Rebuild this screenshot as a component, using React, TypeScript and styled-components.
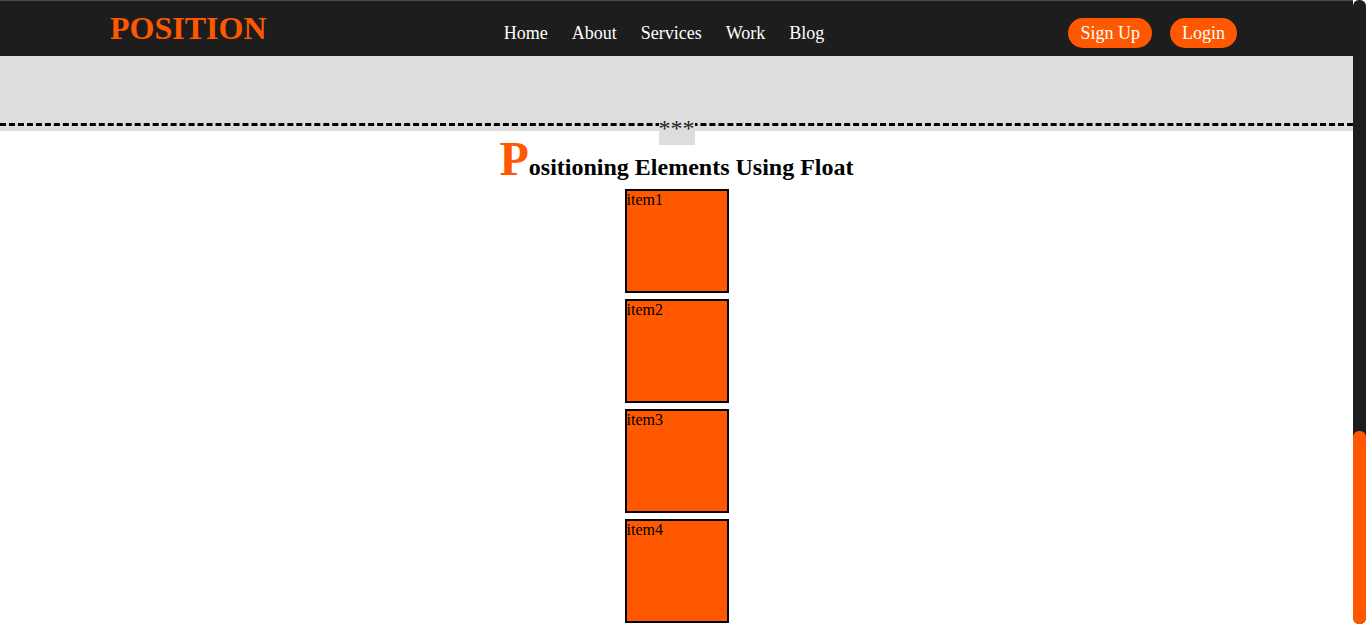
import React from "react";
import styled, { createGlobalStyle } from "styled-components";

const ORANGE = "#ff5800";
const DARK = "#1d1d1d";

const GlobalStyle = createGlobalStyle`
  html, body {
    margin: 0;
    padding: 0;
    overflow: hidden;
    background: #fff;
  }
  body {
    font-family: "Liberation Serif", "Times New Roman", serif;
    color: #000;
  }
`;

const Shell = styled.div`
  display: flex;
  height: 100vh;
  overflow: hidden;
  background: #fff;
`;

const Page = styled.div`
  flex: 1;
  min-width: 0;
  overflow: hidden;
`;

const Header = styled.header`
  display: flex;
  align-items: baseline;
  justify-content: space-between;
  box-sizing: border-box;
  height: 56px;
  padding: 11px 116px 0 110px;
  background: ${DARK};
  border-top: 1px solid #4b4b4b;
`;

const Logo = styled.h1`
  margin: 0;
  font-size: 32px;
  line-height: 32px;
  font-weight: bold;
  color: ${ORANGE};
`;

const Nav = styled.nav`
  display: flex;
  gap: 24px;
  margin-right: 7px;
`;

const NavLink = styled.a`
  color: #fff;
  font-size: 18px;
  text-decoration: none;
`;

const Actions = styled.div`
  display: flex;
  gap: 18px;
`;

const PillButton = styled.button`
  font-family: inherit;
  font-size: 18px;
  line-height: 22px;
  padding: 4px 12px;
  border: none;
  border-radius: 16px;
  background: ${ORANGE};
  color: #fff;
`;

const Banner = styled.div`
  box-sizing: border-box;
  height: 75px;
  padding-top: 67px;
  background: #dddddd;
`;

const DashedRule = styled.div`
  position: relative;
  border-top: 3px dashed #000;
`;

const RuleLabel = styled.span`
  position: absolute;
  left: 50%;
  top: -14px;
  transform: translateX(-50%);
  font-size: 24px;
  line-height: 33px;
  color: #222;
  background: #dddddd;
`;

const Main = styled.main`
  display: flex;
  flex-direction: column;
  align-items: center;
`;

const Title = styled.h2`
  margin: 0;
  font-size: 24px;
  font-weight: bold;
  text-align: center;

  &::first-letter {
    font-size: 48px;
    color: ${ORANGE};
  }
`;

const ItemStack = styled.div`
  display: flex;
  flex-direction: column;
  gap: 6px;
  margin-top: 3px;
`;

const Item = styled.div`
  width: 100px;
  height: 100px;
  border: 2px solid #000;
  background: ${ORANGE};
  font-size: 16px;
  flex-shrink: 0;
`;

const ScrollRail = styled.div`
  width: 13px;
  flex-shrink: 0;
  background: #fff;
  display: flex;
`;

const ScrollTrack = styled.div`
  flex: 1;
  display: flex;
  flex-direction: column;
  justify-content: flex-end;
  background: ${DARK};
  border-radius: 6px;
`;

const ScrollThumb = styled.div`
  height: 193px;
  border-radius: 6px;
  background: ${ORANGE};
`;

const links = ["Home", "About", "Services", "Work", "Blog"];
const items = ["item1", "item2", "item3", "item4"];

export default function App() {
  return (
    <>
      <GlobalStyle />
      <Shell>
        <Page>
          <Header>
            <Logo>POSITION</Logo>
            <Nav>
              {links.map((l) => (
                <NavLink key={l} href="#">
                  {l}
                </NavLink>
              ))}
            </Nav>
            <Actions>
              <PillButton>Sign Up</PillButton>
              <PillButton>Login</PillButton>
            </Actions>
          </Header>
          <Banner>
            <DashedRule>
              <RuleLabel>***</RuleLabel>
            </DashedRule>
          </Banner>
          <Main>
            <Title>Positioning Elements Using Float</Title>
            <ItemStack>
              {items.map((it) => (
                <Item key={it}>{it}</Item>
              ))}
            </ItemStack>
          </Main>
        </Page>
        <ScrollRail>
          <ScrollTrack>
            <ScrollThumb />
          </ScrollTrack>
        </ScrollRail>
      </Shell>
    </>
  );
}
